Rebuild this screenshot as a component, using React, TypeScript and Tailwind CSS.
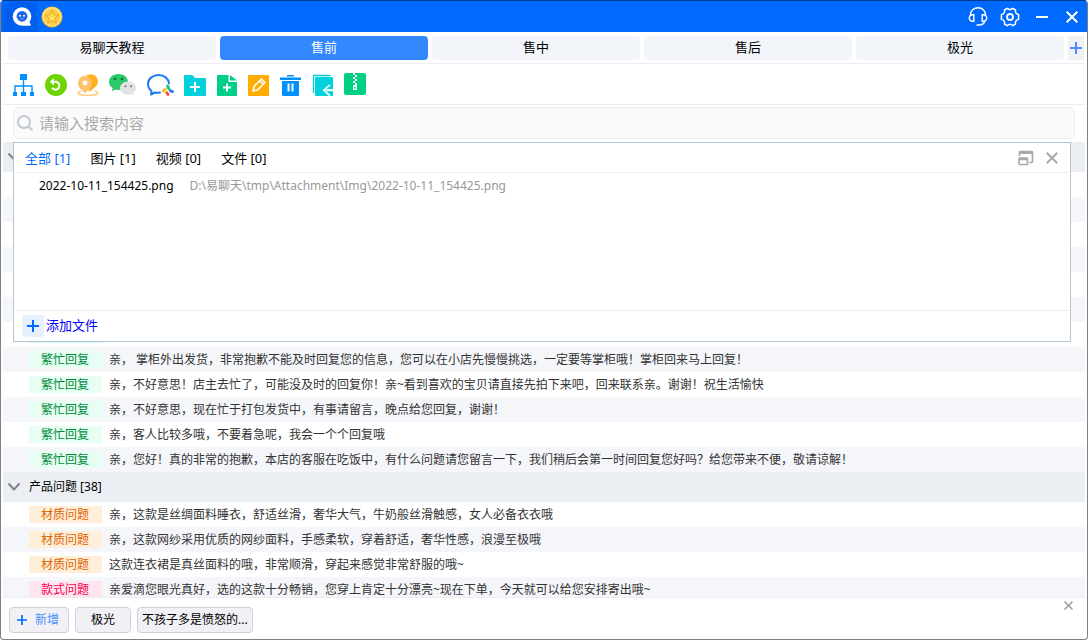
import { useState } from 'react';

type Row = { tag: string; color: string; text: string };

const green = 'bg-[#e6fff2] text-[#008a3c]';
const orange = 'bg-[#ffeed9] text-[#e06500]';
const pink = 'bg-[#ffe5ef] text-[#f5004f]';
const cyan = 'bg-[#d5fafa] text-[#008a8a]';

const busyRows: Row[] = [
    { tag: '', color: '', text: '' },
    { tag: '', color: '', text: '' },
    { tag: '', color: '', text: '' },
    { tag: '', color: '', text: '' },
    { tag: '', color: '', text: '' },
    { tag: '', color: '', text: '' },
    { tag: '', color: cyan, text: '' },
    { tag: '繁忙回复', color: green, text: '亲， 掌柜外出发货，非常抱歉不能及时回复您的信息，您可以在小店先慢慢挑选，一定要等掌柜哦！掌柜回来马上回复！' },
    { tag: '繁忙回复', color: green, text: '亲，不好意思！店主去忙了，可能没及时的回复你！亲~看到喜欢的宝贝请直接先拍下来吧，回来联系亲。谢谢！祝生活愉快' },
    { tag: '繁忙回复', color: green, text: '亲，不好意思，现在忙于打包发货中，有事请留言，晚点给您回复，谢谢！' },
    { tag: '繁忙回复', color: green, text: '亲，客人比较多哦，不要着急呢，我会一个个回复哦' },
    { tag: '繁忙回复', color: green, text: '亲，您好！真的非常的抱歉，本店的客服在吃饭中，有什么问题请您留言一下，我们稍后会第一时间回复您好吗？给您带来不便，敬请谅解！' },
];

const productRows: Row[] = [
    { tag: '材质问题', color: orange, text: '亲，这款是丝绸面料睡衣，舒适丝滑，奢华大气，牛奶般丝滑触感，女人必备衣衣哦' },
    { tag: '材质问题', color: orange, text: '亲，这款网纱采用优质的网纱面料，手感柔软，穿着舒适，奢华性感，浪漫至极哦' },
    { tag: '材质问题', color: orange, text: '这款连衣裙是真丝面料的哦，非常顺滑，穿起来感觉非常舒服的哦~' },
    { tag: '款式问题', color: pink, text: '亲爱滴您眼光真好，选的这款十分畅销，您穿上肯定十分漂亮~现在下单，今天就可以给您安排寄出哦~' },
];

const tabs = ['易聊天教程', '售前', '售中', '售后', '极光'];
const fileTabs = ['全部 [1]', '图片 [1]', '视频 [0]', '文件 [0]'];

const Cross = ({ size, width }: { size: number; width: number }) => (
    <svg width={size} height={size} viewBox="0 0 12 12" fill="none" stroke="currentColor" strokeWidth={width}>
        <path d="M.7.7l10.6 10.6M11.3.7L.7 11.3" />
    </svg>
);

const Plus = ({ size, width }: { size: number; width: number }) => (
    <svg width={size} height={size} viewBox="0 0 12 12" fill="none" stroke="currentColor" strokeWidth={width}>
        <path d="M6 0v12M0 6h12" />
    </svg>
);

const TitleBar = () => (
    <header className="flex h-8 shrink-0 items-center justify-between border-t border-[#003a8c] bg-[#0069ff] pr-[9px] pl-0.5 text-white">
        <div className="flex items-center gap-1">
            <svg width="34" height="31" viewBox="0 0 34 31">
                <path d="M0 31V10Q0 1 11 1H34V31Z" fill="#005ff0" />
                <circle cx="19" cy="15.500" r="9.300" fill="#fff" />
                <path d="M20 24.800H26.500Q28.500 24.800 27.500 23L26 20Z" fill="#fff" />
                <circle cx="19" cy="15.300" r="5.400" fill="#1b66e8" />
                <circle cx="17" cy="14.800" r="1" fill="#fff" />
                <circle cx="21" cy="14.800" r="1" fill="#fff" />
                <path d="M17.300 17.400q1.700 1.200 3.400 0" fill="none" stroke="#8db8ff" strokeWidth=".8" />
            </svg>
            <svg width="22" height="22" viewBox="0 0 22 22">
                <circle cx="11" cy="11" r="10.500" fill="#f3b62c" />
                <circle cx="11" cy="10.700" r="9.700" fill="#ffe07a" />
                <circle cx="11" cy="11" r="8.200" fill="#f9ce4b" />
                <path d="M11 4.500l2 4.100 4.600.6-3.400 3.200.9 4.500-4.100-2.200-4.100 2.200.9-4.500-3.400-3.200 4.600-.6z" fill="#ffd84a" stroke="#eeb02c" strokeWidth="1.100" strokeLinejoin="round" />
                <path d="M9 11.500q2 2 4 0" fill="none" stroke="#fff3bd" strokeWidth="1" />
            </svg>
        </div>
        <div className="flex items-center gap-3">
            <button aria-label="客服">
                <svg width="20" height="20" viewBox="0 0 20 20" fill="none" stroke="#fff" strokeWidth="1.400">
                    <path d="M2.500 8V7.500A7.500 6.800 0 0 1 17.500 7.500V8" />
                    <path d="M5.800 7.700v6.600H4.500A3.200 3.200 0 0 1 1.300 11 3.200 3.200 0 0 1 4.500 7.700zM14.200 7.700v6.600H15.500A3.200 3.200 0 0 0 18.700 11 3.200 3.200 0 0 0 15.500 7.700z" />
                    <path d="M16.800 14.200Q16 17.500 12.500 18H8.500" />
                </svg>
            </button>
            <button aria-label="设置">
                <svg width="20" height="20" viewBox="0 0 20 20" fill="none" stroke="#fff" strokeWidth="1.500" strokeLinejoin="round">
                    <path d="M7.300 1.300Q10 4 12.700 1.300L15.600 3Q14.600 6.500 18.600 7.600V12.400Q14.600 13.500 15.600 17L12.700 18.700Q10 16 7.300 18.700L4.400 17Q5.400 13.500 1.400 12.400V7.600Q5.400 6.500 4.400 3Z" />
                    <circle cx="10" cy="10" r="3" strokeWidth="1.800" />
                </svg>
            </button>
            <button aria-label="最小化" className="flex w-5 justify-center">
                <svg width="12" height="12" viewBox="0 0 12 12"><path d="M0 5h12v2H0z" fill="#fff" /></svg>
            </button>
            <button aria-label="关闭" className="ml-0.5"><Cross size={12} width={2} /></button>
        </div>
    </header>
);

const Toolbar = () => (
    <div className="flex h-[41px] shrink-0 items-center gap-2.5 border-b border-[#ececf2] pt-0.5 pl-2.5">
        <button aria-label="组织">
            <svg width="22" height="22" viewBox="0 0 22 22" fill="#0091ff">
                <path d="M7 0h7v6H7zM0 18h4v4H0zM8 18h5v4H8zM17 18h4v4h-4z" />
                <path d="M10.500 6v12M2 18v-6h17v6" fill="none" stroke="#0091ff" strokeWidth="1.400" />
            </svg>
        </button>
        <button aria-label="刷新">
            <svg width="22" height="22" viewBox="0 0 22 22">
                <circle cx="11" cy="11" r="11" fill="#6dd400" />
                <path d="M7 7.800h4.500a4 4 0 1 1-4.500 6" fill="none" stroke="#fff" strokeWidth="2" />
                <path d="M9 4L4.800 7.800 9 11.600z" fill="#fff" />
            </svg>
        </button>
        <button aria-label="位置">
            <svg width="22" height="22" viewBox="0 0 22 22">
                <path d="M4 17.300C-1 18.600-.5 21.300 11 21.300s12-2.700 7-4" fill="none" stroke="#ffc46b" strokeWidth="1.300" />
                <path d="M14 .3A7 7 0 0 1 21 7.500C21 12 16 15 12 18L8 2.500Q11 .3 14 .3Z" fill="#ffb020" />
                <path d="M8 1.800a7 7 0 0 1 7 7.200c0 4.500-3.300 6.500-7 10-3.700-3.500-7-5.500-7-10a7 7 0 0 1 7-7.200z" fill="#ffc46b" />
                <circle cx="8" cy="9" r="2.400" fill="#fff" />
            </svg>
        </button>
        <button aria-label="微信">
            <svg width="27" height="22" viewBox="0 0 27 22">
                <path d="M9.500 0C15 0 19 3.600 19 8s-4 8-9.500 8q-1.700 0-3.200-.5L3 17.300l.6-3.200Q0 11.800 0 8c0-4.400 4-8 9.500-8z" fill="#2bc96b" />
                <circle cx="6" cy="5" r="1.300" fill="#176b3c" /><circle cx="13" cy="5" r="1.300" fill="#176b3c" />
                <path d="M19 7.500c4.500 0 8 2.900 8 6.600q0 3-2.700 5l.5 2.600-2.700-1.400q-1.400.4-3.100.4c-4.500 0-8-2.900-8-6.600s3.500-6.600 8-6.600z" fill="#e2e2e2" />
                <circle cx="16.500" cy="12.300" r="1.100" fill="#777" /><circle cx="22" cy="12.300" r="1.100" fill="#777" />
            </svg>
        </button>
        <button aria-label="企业微信">
            <svg width="28" height="22" viewBox="0 0 28 22" fill="none">
                <path d="M23 9.500C22.500 4.500 18.300 1 12.500 1S2 5 2 10q0 4.300 3.600 7l-.6 3.600L9 18.500q2.700.5 5 .1" stroke="#1f7bf0" strokeWidth="2" strokeLinecap="round" strokeLinejoin="round" />
                <path d="M21.500 12l1.500 3" stroke="#14cf78" strokeWidth="2.800" strokeLinecap="round" />
                <path d="M24.500 16.800l2 .8" stroke="#1f7bf0" strokeWidth="2.800" strokeLinecap="round" />
                <path d="M20.800 18.600l1.200 1.900" stroke="#fb4b3e" strokeWidth="2.800" strokeLinecap="round" />
                <path d="M17.300 17.300l2-2" stroke="#ffbf18" strokeWidth="2.800" strokeLinecap="round" />
            </svg>
        </button>
        <button aria-label="新建分组">
            <svg width="22" height="22" viewBox="0 0 22 22">
                <path d="M1 1h7.500l2.500 3h10q1 0 1 1v16q0 1-1 1H1q-1 0-1-1V2q0-1 1-1z" fill="#00d1db" />
                <path d="M11 8v10M6 13h10" stroke="#fff" strokeWidth="2" />
            </svg>
        </button>
        <button aria-label="新建话术">
            <svg width="22" height="22" viewBox="0 0 22 22">
                <path d="M2 1h10.500v7H21v13q0 1-1 1H2q-1 0-1-1V2q0-1 1-1zM14 1l7 5.500h-7z" fill="#00cf8a" />
                <path d="M11 9.500v8M7 13.500h8" stroke="#fff" strokeWidth="2" />
            </svg>
        </button>
        <button aria-label="编辑">
            <svg width="22" height="22" viewBox="0 0 22 22">
                <rect y="1" width="21" height="21" rx="1" fill="#ffae00" />
                <path d="M5 17l1-4.500L13.500 5l3.500 3.500L9.500 16zM11.700 6.800l3.500 3.500" fill="none" stroke="#fff" strokeWidth="1.600" strokeLinejoin="round" />
            </svg>
        </button>
        <button aria-label="删除">
            <svg width="22" height="22" viewBox="0 0 22 22" fill="#0091ff">
                <path d="M7 1h7v1.500H7zM0 3.500h21V6H0zM2 7h17v14q0 1-1 1H3q-1 0-1-1z" />
                <path d="M8.500 9.500v8M12.500 9.500v8" stroke="#fff" strokeWidth="2" />
            </svg>
        </button>
        <button aria-label="导入">
            <svg width="22" height="22" viewBox="0 0 22 22">
                <path d="M1.500 19V2q0-.5.500-.5h16.500" fill="none" stroke="#00c9d2" strokeWidth="1.300" />
                <path d="M4 3h16q1 0 1 1v17q0 1-1 1H4q-1 0-1-1V4q0-1 1-1z" fill="#00d1db" />
                <path d="M17.800 10.800L12 16.200l5.800 5.400" fill="none" stroke="#fff" strokeWidth="1.800" />
                <path d="M14.500 16.200H21" stroke="#fff" strokeWidth="2" />
            </svg>
        </button>
        <button aria-label="压缩包" className="pb-0.5">
            <svg width="22" height="22" viewBox="0 0 22 22">
                <rect width="22" height="22" rx="2" fill="#00d084" />
                <path d="M9 0h2v2H9zM11 2h2v2h-2zM9 4h2v2H9zM11 6h2v2h-2zM9 8h2v2H9zM11 10h2v2h-2z" fill="#fff" />
                <path d="M9 12h4v5H9zM10.300 14v1.700h1.400V14z" fill="#fff" fillRule="evenodd" />
            </svg>
        </button>
    </div>
);

const Group = ({ title, rows }: { title: string; rows: Row[] }) => (
    <section>
        <h2 className="flex h-[30px] items-center gap-2 bg-[#ebeff4] pl-1 text-xs text-black">
            <svg width="14" height="10" viewBox="0 0 14 10" fill="none" stroke="#808488" strokeWidth="2"><path d="M1.500 1.500L7 7.500l5.500-6" /></svg>
            {title}
        </h2>
        <ul>
            {rows.map((row, i) => (
                <li key={i} className="flex h-[25px] items-center gap-[7px] pl-[26px] text-xs whitespace-nowrap text-[#333] even:bg-[#f5f6fa]">
                    <span className={`h-[17px] w-[73px] shrink-0 pl-3 leading-[17px] ${row.color}`}>{row.tag}</span>
                    <span>{row.text}</span>
                </li>
            ))}
        </ul>
    </section>
);

const FilePanel = () => {
    const [fileTab, setFileTab] = useState(0);

    return (
        <div className="absolute top-0 right-3.5 left-2.5 flex h-[200px] flex-col border border-[#b4c5d6] bg-white px-px text-[13px]">
            <div className="flex h-[30px] items-center justify-between border-b border-[#ececf2] pr-[11px] pl-2.5">
                <div className="flex gap-5 pt-0.5">
                    {fileTabs.map((name, i) => (
                        <button key={name} onClick={() => setFileTab(i)} className={fileTab === i ? 'text-[#0069ff]' : 'text-black'}>{name}</button>
                    ))}
                </div>
                <div className="flex items-center gap-3 text-[#aaa]">
                    <button aria-label="还原">
                        <svg width="16" height="16" viewBox="0 0 16 16" fill="none" stroke="currentColor" strokeWidth="1.700">
                            <path d="M1.500 6V2.500Q1.500 1.500 2.500 1.500H13.500Q14.500 1.500 14.500 2.500V11.500Q14.500 12.500 13.500 12.500H11.500" />
                            <path d="M1 2.500h14" strokeWidth="3" />
                            <rect x="1" y="8" width="8.500" height="6.500" rx="1" />
                            <path d="M1 9h8.500" strokeWidth="2.500" />
                        </svg>
                    </button>
                    <button aria-label="关闭面板"><Cross size={12} width={2} /></button>
                </div>
            </div>
            <div className="flex flex-1 items-start gap-4 pt-1 pl-6 text-xs leading-[18px]">
                <span className="text-black">2022-10-11_154425.png</span>
                <span className="text-[#999]">D:\易聊天\tmp\Attachment\Img\2022-10-11_154425.png</span>
            </div>
            <div className="flex h-[31px] items-center border-t border-[#ececf2] pl-[7px]">
                <button className="flex items-center gap-0.5 text-[#0000ff]">
                    <span className="flex size-[22px] items-center justify-center rounded-xs bg-[#e6f0ff] text-[#0069ff]"><Plus size={12} width={2} /></span>
                    添加文件
                </button>
            </div>
        </div>
    );
};

export default function App() {
    const [tab, setTab] = useState(1);

    return (
        <div className="flex h-screen flex-col overflow-hidden rounded-sm border border-t-0 border-[#808080] bg-white font-['Noto_Sans','Noto_Sans_CJK_SC',sans-serif]">
            <TitleBar />
            <main className="flex min-h-0 flex-1 flex-col px-0.5">
                <nav className="flex h-8 shrink-0 items-center gap-1 border-b border-[#ececf2] pr-px pl-[5px] text-[13px]">
                    {tabs.map((name, i) => (
                        <button key={name} onClick={() => setTab(i)} className={`h-6 flex-1 rounded-sm ${tab === i ? 'bg-[#3388ff] text-white' : 'bg-[#f2f5fa] text-black'}`}>{name}</button>
                    ))}
                    <button aria-label="添加标签" className="flex h-6 w-4 items-center justify-center bg-[#f0f0f5] text-[#4a8fff]"><Plus size={12} width={2} /></button>
                </nav>
                <Toolbar />
                <div className="shrink-0 px-2.5 pt-0.5 pb-[3px]">
                    <label className="flex h-8 items-center gap-1.5 rounded-md border border-[#ececf0] bg-[#fafafa] pl-[3px]">
                        <svg width="16" height="16" viewBox="0 0 16 16" fill="none" stroke="#c0c8d4" strokeWidth="2">
                            <circle cx="7" cy="7" r="6" />
                            <path d="M11.500 11.500l4 4" />
                        </svg>
                        <input type="text" placeholder="请输入搜索内容" className="flex-1 bg-transparent text-[15px] text-black outline-none placeholder:text-[#aaa]" />
                    </label>
                </div>
                <div className="relative min-h-0 flex-1 overflow-hidden">
                    <Group title="" rows={busyRows} />
                    <Group title="产品问题 [38]" rows={productRows} />
                    <FilePanel />
                </div>
                <footer className="flex h-[42px] shrink-0 items-start justify-between border-t border-[#ececf2] pr-3 pl-1.5 text-xs">
                    <div className="flex gap-1.5 pt-[9px] text-black">
                        <button className="flex h-[26px] items-center gap-2 rounded-sm border border-[#cfd2dc] bg-[#f0f0f5] pr-[9px] pl-[7px] text-[#4a8fff]">
                            <span className="text-[#0069ff]"><Plus size={10} width={2} /></span>
                            新增
                        </button>
                        <button className="h-[26px] rounded-sm border border-[#cfd2dc] bg-[#f0f0f5] px-[15px]">极光</button>
                        <button className="h-[26px] rounded-sm border border-[#cfd2dc] bg-[#f0f0f5] px-1">不孩子多是愤怒的...</button>
                    </div>
                    <button aria-label="关闭底栏" className="pt-[3px] leading-none text-[#999]"><Cross size={9} width={2} /></button>
                </footer>
            </main>
        </div>
    );
}
